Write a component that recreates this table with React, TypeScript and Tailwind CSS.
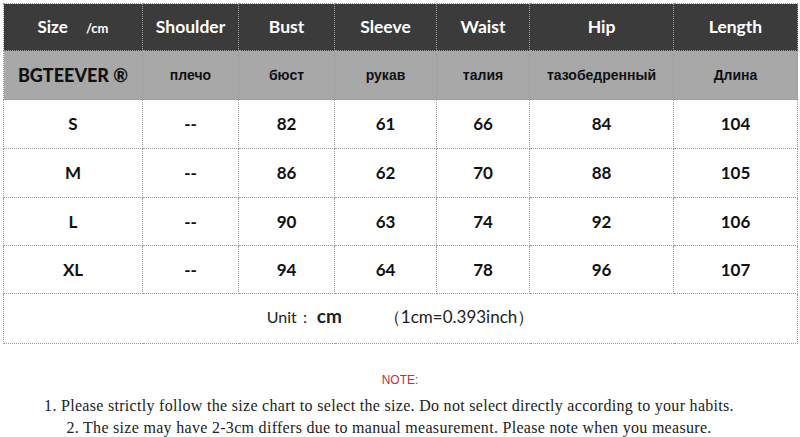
const COLS = [139, 96, 96, 102, 93, 144, 124];

const HEAD = ["Shoulder", "Bust", "Sleeve", "Waist", "Hip", "Length"];
const RU = ["плечо", "бюст", "рукав", "талия", "тазобедренный", "Длина"];
const ROWS = [
  { h: "h-[49px]", v: ["S", "--", "82", "61", "66", "84", "104"] },
  { h: "h-[49px]", v: ["M", "--", "86", "62", "70", "88", "105"] },
  { h: "h-[48px]", v: ["L", "--", "90", "63", "74", "92", "106"] },
  { h: "h-[48px]", v: ["XL", "--", "94", "64", "78", "96", "107"] },
];

const cell = "border border-dotted border-[#9a9a9a] text-center align-middle p-0";

export default function App() {
  return (
    <div className="w-[800px] h-[437px] bg-white overflow-hidden pt-[3px] px-[3px]">
      <table
        className="border-collapse table-fixed w-[794px]"
        style={{ fontFamily: "Lato, 'Open Sans', sans-serif" }}
      >
        <colgroup>
          {COLS.map((w, i) => (
            <col key={i} style={{ width: w }} />
          ))}
        </colgroup>
        <tbody>
          <tr className="h-[47px] bg-[#3b3b3b] text-white">
            <td className={cell}>
              <span className="text-[17px] font-bold">Size</span>
              <span className="text-[13px] font-bold ml-[18px]">/cm</span>
            </td>
            {HEAD.map((h) => (
              <td key={h} className={`${cell} text-[17.5px] font-bold`}>
                {h}
              </td>
            ))}
          </tr>
          <tr className="h-[49px] bg-[#a8a8a8] text-[#111]">
            <td className={`${cell} text-[18px] font-black`}>BGTEEVER ®</td>
            {RU.map((r) => (
              <td
                key={r}
                className={`${cell} text-[14px] font-bold`}
                style={{ fontFamily: "'Liberation Sans', Arial, sans-serif" }}
              >
                {r}
              </td>
            ))}
          </tr>
          {ROWS.map((row) => (
            <tr key={row.v[0]} className={`${row.h} text-[#111]`}>
              {row.v.map((v, i) => (
                <td key={i} className={`${cell} text-[17px] font-bold`}>
                  {v}
                </td>
              ))}
            </tr>
          ))}
          <tr className="h-[50px] text-[#222]">
            <td colSpan={7} className={`${cell} pb-[4px]`}>
              <span className="text-[16px]">Unit：</span>
              <span className="text-[19px] font-bold ml-1">cm</span>
              <span className="text-[17px] ml-[42px]">（1cm=0.393inch）</span>
            </td>
          </tr>
        </tbody>
      </table>

      <div
        className="flex flex-col items-center text-[#222]"
        style={{ fontFamily: "'Liberation Serif', 'Times New Roman', serif" }}
      >
        <p
          className="mt-[27px] text-[12px] text-[#c0303a]"
          style={{ fontFamily: "'Liberation Sans', Arial, sans-serif" }}
        >
          NOTE:
        </p>
        <p className="mt-[7px] mr-[22px] text-[16px] leading-[20px] tracking-[0.3px]">
          1. Please strictly follow the size chart to select the size. Do not select directly according to your habits.
        </p>
        <p className="mt-[2px] mr-[22px] text-[16px] leading-[20px] tracking-[0.3px]">
          2. The size may have 2-3cm differs due to manual measurement. Please note when you measure.
        </p>
      </div>
    </div>
  );
}
